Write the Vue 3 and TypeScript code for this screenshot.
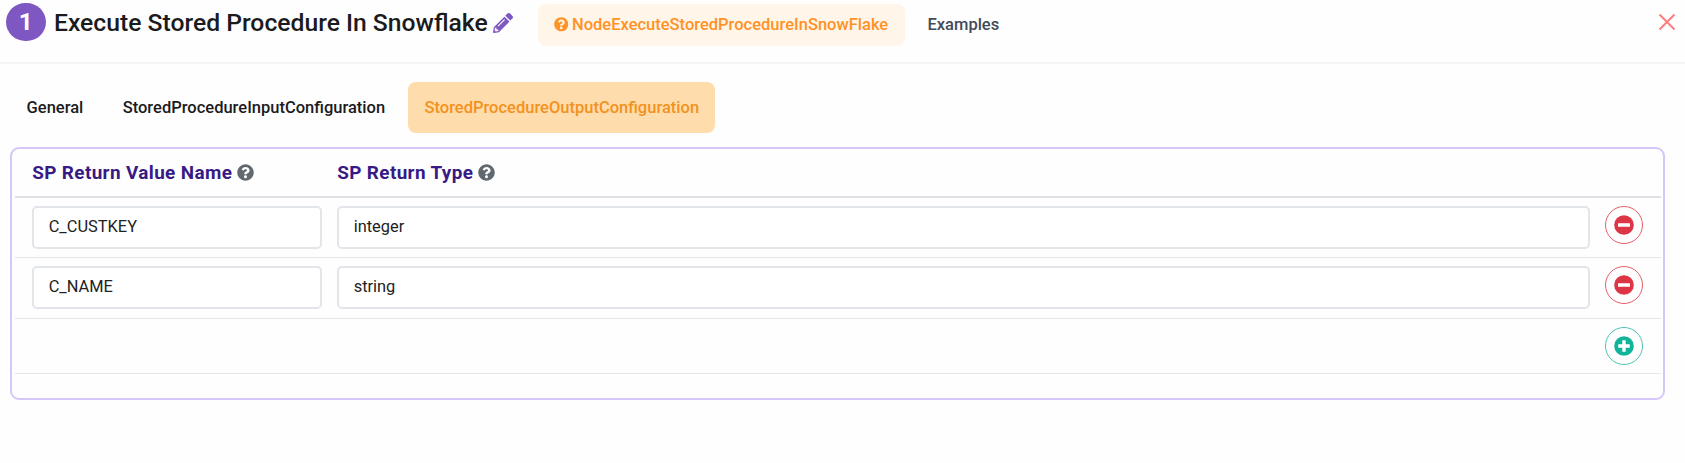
<script setup lang="ts">
import { ref } from 'vue'

interface ReturnValue {
  id: number
  name: string
  type: string
}

const tabs = ['General', 'StoredProcedureInputConfiguration', 'StoredProcedureOutputConfiguration']
const activeTab = ref(2)

const values = ref<ReturnValue[]>([
  { id: 1, name: 'C_CUSTKEY', type: 'integer' },
  { id: 2, name: 'C_NAME', type: 'string' },
])
let nextId = 3

function addValue() {
  values.value.push({ id: nextId++, name: '', type: '' })
}
function removeValue(id: number) {
  values.value = values.value.filter((v) => v.id !== id)
}

const questionPath =
  'M504 256c0 136.997-111.043 248-248 248S8 392.997 8 256C8 119.083 119.043 8 256 8s248 111.083 248 248zM262.655 90c-54.497 0-89.255 22.957-116.549 63.758-3.536 5.286-2.353 12.415 2.715 16.258l34.699 26.31c5.205 3.947 12.621 3.008 16.665-2.122 17.864-22.658 30.113-35.797 57.303-35.797 20.429 0 45.698 13.148 45.698 32.958 0 14.976-12.363 22.667-32.534 33.976C247.128 238.528 216 254.941 216 296v4c0 6.627 5.373 12 12 12h56c6.627 0 12-5.373 12-12v-1.333c0-28.462 83.186-29.647 83.186-106.667 0-58.002-60.165-102-116.531-102zM256 338c-25.365 0-46 20.635-46 46 0 25.364 20.635 46 46 46s46-20.636 46-46c0-25.365-20.635-46-46-46z'
const pencilPath =
  'M497.9 142.1l-46.1 46.1c-4.7 4.7-12.3 4.7-17 0l-111-111c-4.7-4.7-4.7-12.3 0-17l46.1-46.1c18.7-18.7 49.1-18.7 67.9 0l60.1 60.1c18.8 18.7 18.8 49.1 0 67.9zM284.2 99.8L21.6 362.4.4 483.9c-2.9 16.4 11.4 30.6 27.8 27.8l121.5-21.3 262.6-262.6c4.7-4.7 4.7-12.3 0-17l-111-111c-4.8-4.7-12.4-4.7-17.1 0zM124.1 339.9c-5.5-5.5-5.5-14.3 0-19.8l154-154c5.5-5.5 14.3-5.5 19.8 0s5.5 14.3 0 19.8l-154 154c-5.5 5.5-14.3 5.5-19.8 0zM88 424h48v36.3l-64.5 11.3-31.1-31.1L51.7 376H88v48z'
</script>

<template>
  <main class="page">
    <header class="header">
      <span class="step">1</span>
      <h1 class="title">Execute Stored Procedure In Snowflake</h1>
      <svg class="pencil" viewBox="0 0 512 512"><path :d="pencilPath" /></svg>
      <a class="doc-link">
        <svg viewBox="0 0 512 512"><path :d="questionPath" /></svg>
        <span>NodeExecuteStoredProcedureInSnowFlake</span>
      </a>
      <a class="examples">Examples</a>
      <button class="close" aria-label="Close">
        <svg viewBox="0 0 18 18"><path d="M1.5 1.5l15 15M16.5 1.5l-15 15" /></svg>
      </button>
    </header>

    <nav class="tabs">
      <button
        v-for="(tab, i) in tabs"
        :key="tab"
        class="tab"
        :class="{ active: i === activeTab }"
        @click="activeTab = i"
      >{{ tab }}</button>
    </nav>

    <section class="panel">
      <div class="row head">
        <div class="label">SP Return Value Name<svg viewBox="0 0 512 512"><path :d="questionPath" /></svg></div>
        <div class="label">SP Return Type<svg viewBox="0 0 512 512"><path :d="questionPath" /></svg></div>
      </div>
      <div v-for="v in values" :key="v.id" class="row value">
        <input v-model="v.name" class="field" type="text" spellcheck="false" />
        <input v-model="v.type" class="field" type="text" spellcheck="false" />
        <button class="round remove" aria-label="Remove" @click="removeValue(v.id)">
          <svg viewBox="0 0 20 20"><circle cx="10" cy="10" r="9.8" /><rect x="4" y="8.2" width="12" height="3.6" rx=".5" /></svg>
        </button>
      </div>
      <div class="row add-row">
        <button class="round add" aria-label="Add" @click="addValue">
          <svg viewBox="0 0 20 20"><circle cx="10" cy="10" r="9.8" /><path d="M8.3 4.2h3.4v4.1h4.1v3.4h-4.1v4.1H8.3v-4.1H4.2V8.3h4.1z" /></svg>
        </button>
      </div>
    </section>
  </main>
</template>

<style>
body {
  background: #fefefe;
}
</style>

<style scoped>
.page {
  height: 463px;
  overflow: hidden;
  font-family: Roboto, sans-serif;
  color: #1b1b1d;
}
button {
  border: 0;
  padding: 0;
  background: none;
  font: inherit;
  color: inherit;
  cursor: pointer;
}
svg {
  display: block;
  flex: none;
  fill: currentColor;
}
.header {
  display: flex;
  align-items: flex-start;
  box-sizing: border-box;
  height: 64px;
  padding: 2.5px 9px 0 6px;
  border-bottom: 2px solid #f4f4f5;
}
.step {
  flex: none;
  width: 39.5px;
  height: 38.5px;
  border-radius: 50%;
  background: #7e57c2;
  color: #fff;
  font-size: 24.5px;
  font-weight: 700;
  line-height: 38px;
  text-align: center;
}
.title {
  flex: none;
  width: 436px;
  margin: 0 0 0 8.5px;
  font-size: 24.7px;
  font-weight: 500;
  line-height: 39px;
  white-space: nowrap;
}
.pencil {
  width: 20px;
  height: 20px;
  margin: 10.5px 0 0 3px;
  color: #7e57c2;
}
.doc-link {
  display: flex;
  align-items: center;
  gap: 4px;
  box-sizing: border-box;
  width: 367px;
  height: 42px;
  margin: 1.2px 0 0 24.5px;
  padding: 0 16px;
  border-radius: 8px;
  background: #fff5e8;
  color: #ff9224;
  font-size: 16.5px;
  font-weight: 500;
}
.doc-link svg {
  width: 14.5px;
  height: 14.5px;
}
.examples {
  margin: 1.2px 0 0 23px;
  color: #414c58;
  font-size: 16.5px;
  font-weight: 500;
  line-height: 42px;
}
.close {
  margin: 10px 0 0 auto;
}
.close svg {
  width: 18px;
  height: 18px;
  fill: none;
  stroke: #ff7b7b;
  stroke-width: 1.9;
}
.tabs {
  display: flex;
  gap: 7px;
  padding: 18px 0 0 10.4px;
}
.tab {
  height: 51px;
  padding: 0 16.2px 1px;
  border-radius: 8px;
  font-size: 16.5px;
  font-weight: 500;
  line-height: 49px;
}
.active {
  background: #ffdcab;
  color: #f39220;
}
.panel {
  box-sizing: border-box;
  width: 1655px;
  height: 253px;
  margin: 14px 0 0 10px;
  padding: 0 2.5px;
  border: 2px solid #d6c7fa;
  border-radius: 9px;
}
.row {
  display: grid;
  grid-template-columns: 290px 1253px 38px;
  column-gap: 15px;
  box-sizing: border-box;
  padding-left: 17.7px;
  border-bottom: 1.5px solid #e5e7ea;
}
.head {
  height: 49px;
  align-items: center;
  padding-bottom: 1px;
  border-bottom: 2px solid #dee2e6;
}
.label {
  display: flex;
  align-items: center;
  gap: 5px;
  color: #371a86;
  font-size: 18.9px;
  font-weight: 700;
  letter-spacing: .38px;
  white-space: nowrap;
}
.label svg {
  width: 17px;
  height: 17px;
  color: #606970;
}
.value {
  height: 60.5px;
  padding-top: 8px;
}
.head + .value {
  height: 60px;
}
.field {
  box-sizing: border-box;
  width: 100%;
  height: 43px;
  padding: 0 14.5px 2px;
  border: 2px solid #e2e5e9;
  border-radius: 5px;
  outline: none;
  background: #fff;
  color: #222;
  font: 400 16.4px Roboto, sans-serif;
}
.round {
  display: grid;
  place-items: center;
  box-sizing: border-box;
  width: 38px;
  height: 38px;
  border: 1.5px solid currentColor;
  border-radius: 50%;
}
.round svg {
  width: 20px;
  height: 20px;
}
.round svg rect,
.round svg path {
  fill: #fff;
}
.remove {
  border-color: #e65f6c;
  color: #dc3545;
}
.add {
  grid-column: 3;
  border-color: #4fc4b2;
  color: #12b39b;
}
.add-row {
  height: 55px;
  padding-top: 8px;
}
</style>
